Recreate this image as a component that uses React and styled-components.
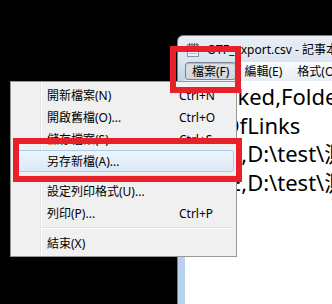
import React from 'react';
import styled, { createGlobalStyle } from 'styled-components';

const GlobalStyle = createGlobalStyle`
  html, body {
    margin: 0;
    padding: 0;
    background: #000;
  }
  body {
    font-family: "Noto Sans", "Noto Sans CJK TC", sans-serif;
  }
`;

const Desktop = styled.div`
  position: relative;
  width: 332px;
  height: 304px;
  background: #000;
  overflow: hidden;
`;

// notepad window, sits on the desktop canvas
const Window = styled.div`
  position: absolute;
  left: 177px;
  top: 35px;
  width: 220px;
  height: 300px;
  display: flex;
  flex-direction: column;
  box-sizing: border-box;
  border: 1px solid #74808e;
  border-radius: 6px 6px 0 0;
  padding-left: 7px;
  background: linear-gradient(#e9eef4, #dbe5f0 26px, #c3d7ec 40px, #b9d1ea 80px);
`;

const TitleBar = styled.div`
  height: 26px;
  display: flex;
  align-items: center;
  padding-left: 2px;
  gap: 8px;
  font-size: 12px;
  color: #000;
  white-space: nowrap;
`;

const MenuBar = styled.div`
  height: 19px;
  display: flex;
  align-items: stretch;
  gap: 1px;
  background: linear-gradient(#fbfcfe, #e6edf6);
  font-size: 12px;
  white-space: nowrap;
`;

const MenuBarItem = styled.div`
  display: flex;
  align-items: center;
  padding: 0 6px;
  border: 1px solid ${p => (p.$pressed ? '#7d8590' : 'transparent')};
  border-radius: 3px;
  background: ${p => (p.$pressed ? 'linear-gradient(#dfe2e6, #d3d7dc)' : 'transparent')};
  box-shadow: ${p => (p.$pressed ? 'inset 0 1px 1px rgba(0,0,0,0.2)' : 'none')};
  margin: 0 0 1px;
`;

const Editor = styled.div`
  flex: 1;
  background: #fff;
  padding: 1px 0 0 2px;
  font-size: 22px;
  line-height: 28.5px;
  white-space: pre;
  color: #000;
  overflow: hidden;
`;

const Popup = styled.div`
  position: absolute;
  left: 10px;
  top: 81px;
  width: 227px;
  box-sizing: border-box;
  border: 1px solid #979797;
  padding: 2px;
  background: linear-gradient(to right, #f0f0f0 29px, #e2e3e3 29px, #e2e3e3 30px, #fff 30px, #fff 31px, #f0f0f0 31px);
  font-size: 12px;
  color: #000;
`;

const Item = styled.div`
  height: 22px;
  box-sizing: border-box;
  display: grid;
  grid-template-columns: 132px 1fr;
  align-items: center;
  padding-left: 33px;
  border: 1px solid ${p => (p.$active ? '#a9cdf0' : 'transparent')};
  border-radius: 3px;
  background: ${p => (p.$active ? 'linear-gradient(#edf4fc, #dce9f6)' : 'transparent')};
  white-space: nowrap;
`;

const Separator = styled.div`
  height: 8px;
  display: flex;
  flex-direction: column;
  justify-content: center;
  margin-left: 28px;
  &::before {
    content: '';
    height: 1px;
    background: #e0e0e0;
    border-bottom: 1px solid #fff;
  }
`;

const Mark = styled.div`
  position: absolute;
  box-sizing: border-box;
  border: 6px solid #e8202a;
`;

const NotepadIcon = () => (
  <svg width="12" height="15" viewBox="0 0 12 15">
    <rect x="0.5" y="2.5" width="11" height="12" fill="#eef4fb" stroke="#7e97b3" />
    <rect x="1" y="3" width="10" height="2" fill="#8fb6de" />
    <path d="M2 7.5h8M2 9.5h8M2 11.5h8" stroke="#a9c0d8" strokeWidth="1" />
    <path d="M2.5 1v3M5 1v3M7.5 1v3M10 1v3" stroke="#4a5a6c" strokeWidth="1" />
  </svg>
);

const fileMenu = [
  { label: '開新檔案(N)', key: 'Ctrl+N' },
  { label: '開啟舊檔(O)...', key: 'Ctrl+O' },
  { label: '儲存檔案(S)', key: 'Ctrl+S' },
  { label: '另存新檔(A)...', active: true },
  { sep: true },
  { label: '設定列印格式(U)...' },
  { label: '列印(P)...', key: 'Ctrl+P' },
  { sep: true },
  { label: '結束(X)' },
];

const lines = [
  'Checked,FolderName',
  'CntOfLinks',
  'TRUE,D:\\test\\測試',
  'TRUE,D:\\test\\測試',
];

export default function App() {
  return (
    <Desktop>
      <GlobalStyle />
      <Window>
        <TitleBar>
          <NotepadIcon />
          <span>OTF_export.csv - 記事本</span>
        </TitleBar>
        <MenuBar>
          <MenuBarItem $pressed>檔案(F)</MenuBarItem>
          <MenuBarItem>編輯(E)</MenuBarItem>
          <MenuBarItem>格式(O)</MenuBarItem>
        </MenuBar>
        <Editor>{lines.join('\n')}</Editor>
      </Window>
      <Popup>
        {fileMenu.map((m, i) =>
          m.sep ? (
            <Separator key={i} />
          ) : (
            <Item key={i} $active={m.active}>
              <span>{m.label}</span>
              <span>{m.key}</span>
            </Item>
          )
        )}
      </Popup>
      <Mark style={{ left: 170, top: 46, width: 71, height: 47 }} />
      <Mark style={{ left: 13, top: 138, width: 229, height: 44 }} />
    </Desktop>
  );
}
